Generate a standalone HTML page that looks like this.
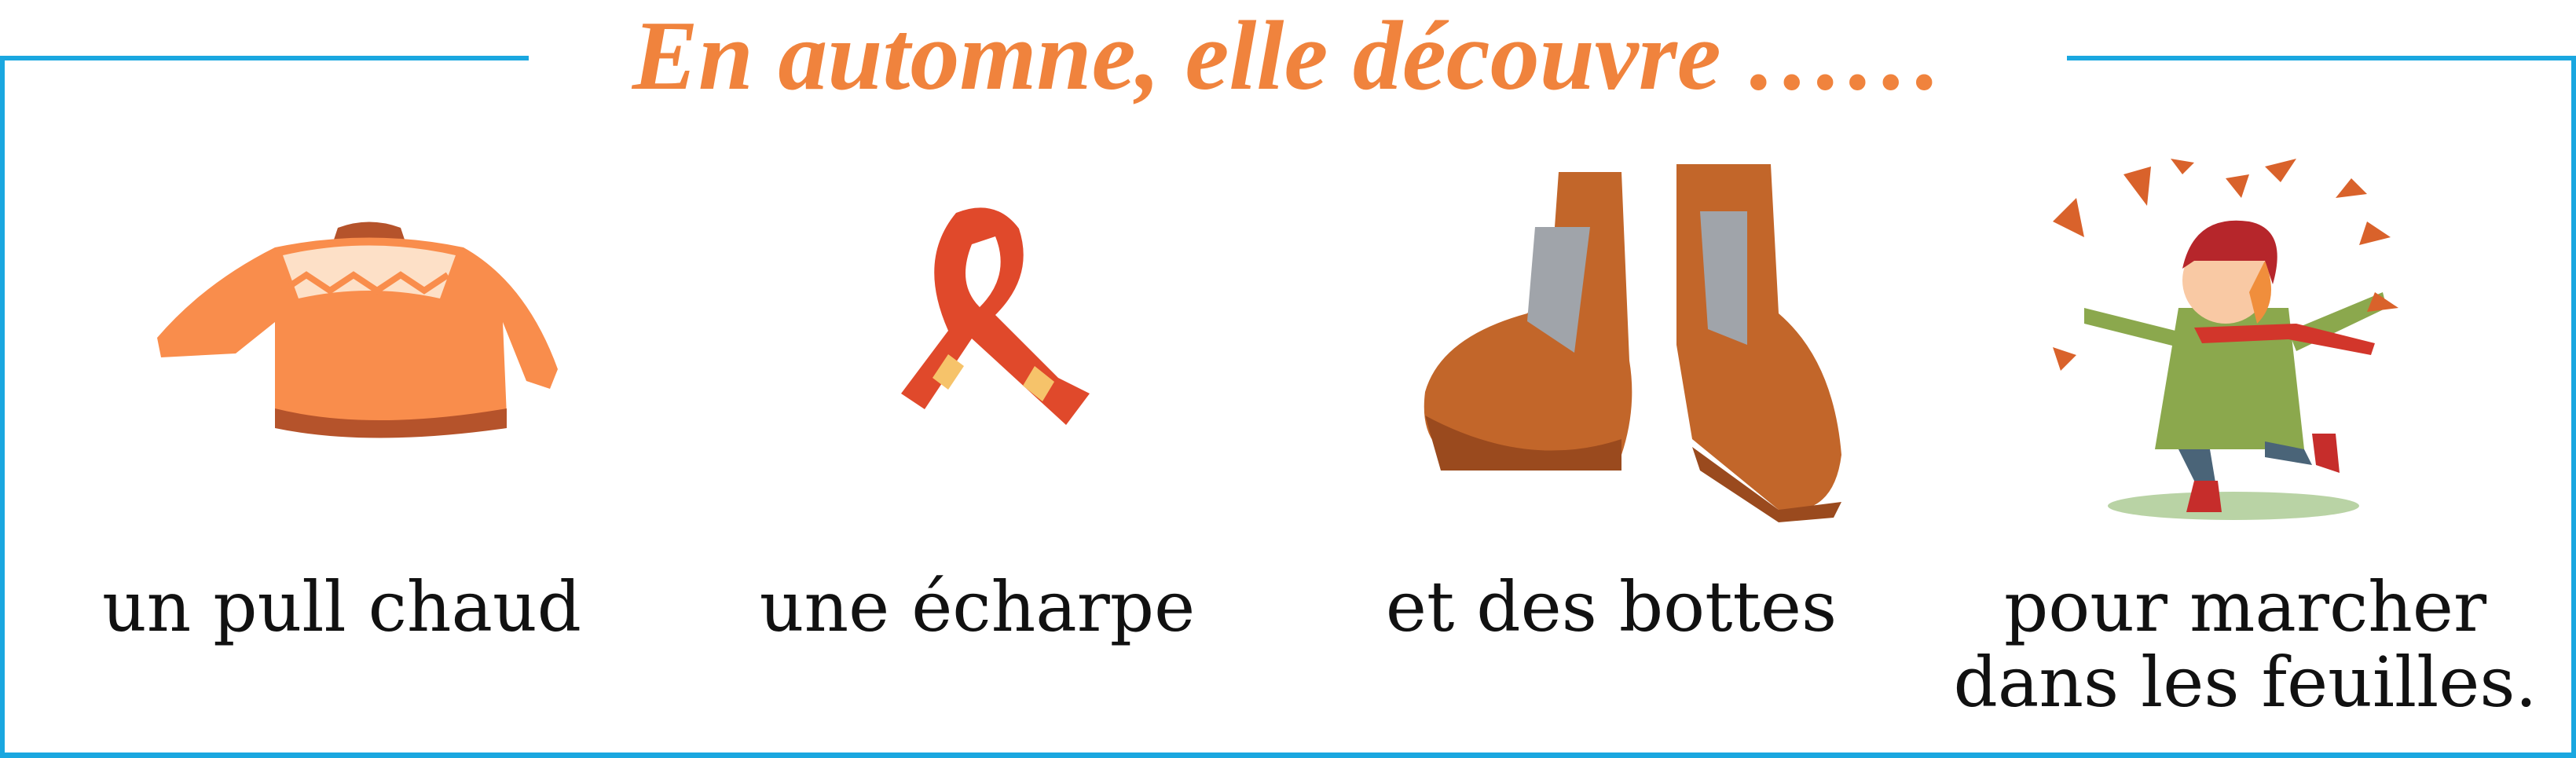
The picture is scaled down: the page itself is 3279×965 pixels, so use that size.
<!DOCTYPE html>
<html><head><meta charset="utf-8"><style>
html,body{margin:0;padding:0;background:#fff;}
body{width:3279px;height:965px;position:relative;overflow:hidden;font-family:"Liberation Serif",serif;}
.b{position:absolute;background:#1aa7e0;}
.t{position:absolute;left:0;width:3279px;text-align:center;top:2px;font-style:italic;font-weight:bold;font-size:126px;color:#f0833d;line-height:140px;}
.l{position:absolute;font-family:"DejaVu Serif",serif;font-size:88px;color:#111;text-align:center;line-height:96px;width:900px;}
svg{position:absolute;}
</style></head><body>
<div class="b" style="left:0;top:71px;width:673px;height:6px"></div>
<div class="b" style="left:2631px;top:71px;width:648px;height:6px"></div>
<div class="b" style="left:0;top:71px;width:6px;height:894px"></div>
<div class="b" style="left:3273px;top:71px;width:6px;height:894px"></div>
<div class="b" style="left:0;top:958px;width:3279px;height:7px"></div>
<div class="t">En automne, elle découvre ……</div>

<svg style="left:200px;top:270px" width="540" height="300" viewBox="0 0 540 300">
<path d="M230 20 Q270 5 310 20 L320 50 L220 50Z" fill="#b5532b"/>
<path d="M150 45 Q270 20 390 45 Q470 90 510 200 L500 225 L470 215 L440 140 L445 260 Q270 290 150 260 L150 140 L100 180 L5 185 L0 160 Q60 90 150 45Z" fill="#f98d4c"/>
<path d="M160 55 Q270 30 380 55 L360 110 Q270 90 180 110Z" fill="#fde0c7"/>
<path d="M160 100 L190 80 L220 100 L250 80 L280 100 L310 80 L340 100 L370 80" stroke="#f98d4c" stroke-width="8" fill="none"/>
<path d="M150 250 Q270 280 445 250 L445 275 Q270 300 150 275Z" fill="#b5532b"/>
</svg>

<svg style="left:1087px;top:251px" width="380" height="345" viewBox="0 0 380 345">
<path d="M130 20 Q180 0 210 40 Q230 100 180 150 L260 230 L300 250 L270 290 L150 180 L90 270 L60 250 L120 170 Q80 80 130 20Z M150 60 Q130 110 160 140 Q200 100 180 50Z" fill="#e0492b" fill-rule="evenodd"/>
<path d="M100 230 L120 200 L140 215 L120 245Z M230 215 L255 235 L240 260 L215 240Z" fill="#f6c36a"/>
</svg>

<svg style="left:1794px;top:199px" width="590" height="466" viewBox="0 0 590 466">
<path d="M190 20 L270 20 L280 260 Q290 320 270 380 L80 390 Q10 380 20 300 Q40 230 150 200 L180 160Z" fill="#c2662a"/>
<path d="M340 10 L460 10 L470 200 Q540 260 550 380 Q540 460 470 450 L360 360 L340 240Z" fill="#c2662a"/>
<path d="M160 90 L230 90 L210 250 L150 210Z M370 70 L430 70 L430 240 L380 220Z" fill="#a0a4aa"/>
<path d="M20 330 Q150 400 270 360 L270 400 L40 400Z M360 370 L470 450 L550 440 L540 460 L470 466 L370 400Z" fill="#9a4a1e"/>
</svg>

<svg style="left:2593px;top:192px" width="522" height="473" viewBox="0 0 522 473">
<ellipse cx="250" cy="452" rx="160" ry="18" fill="#b9d3a5"/>
<path d="M180 200 L320 200 L340 380 L150 380Z" fill="#8ba84d"/>
<path d="M60 200 L180 230 L180 250 L60 220Z M320 230 L440 180 L445 200 L330 255Z" fill="#8ba84d"/>
<path d="M180 380 L200 420 L210 440 L230 440 L220 380Z M290 370 L340 380 L350 400 L290 390Z" fill="#4a6478"/>
<path d="M200 420 L230 420 L235 460 L190 460Z M350 360 L380 360 L385 410 L355 400Z" fill="#c62d2b"/>
<circle cx="240" cy="165" r="55" fill="#f9c9a4"/>
<path d="M185 150 Q200 80 270 90 Q320 100 300 170 L290 140 L200 140Z" fill="#b6262b"/>
<path d="M290 140 Q310 190 280 220 L270 180Z" fill="#f08e3c"/>
<path d="M200 225 L330 220 L430 245 L425 260 L320 240 L210 245Z" fill="#d2362b"/>
<path d="M20 90 L50 60 L60 110Z M110 30 L145 20 L140 70Z M170 10 L200 15 L185 30Z M240 35 L270 30 L260 60Z M290 20 L330 10 L310 40Z M400 35 L420 55 L380 60Z M420 90 L450 110 L410 120Z M430 180 L460 200 L420 205Z M20 250 L50 260 L30 280Z" fill="#d9622b"/>
</svg>

<div class="l" style="left:-15px;top:725px">un pull chaud</div>
<div class="l" style="left:794px;top:725px">une écharpe</div>
<div class="l" style="left:1601px;top:725px">et des bottes</div>
<div class="l" style="left:2408px;top:725px">pour marcher<br>dans les feuilles.</div>
</body></html>
